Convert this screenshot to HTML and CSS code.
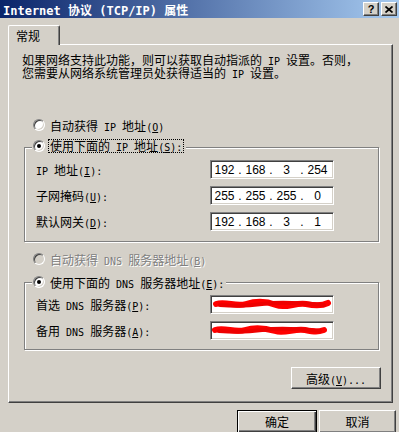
FILE: index.html
```html
<!DOCTYPE html>
<html lang="zh-CN">
<head>
    <meta charset="UTF-8">
    <title>Internet 协议 (TCP/IP) 属性</title>
    <link rel="stylesheet" href="styles.css">
</head>
<body>
    <div class="titlebar">
        <span class="title">Internet 协议 (TCP/IP) 属性</span>
        <div class="caption">
            <span class="cbtn help">?</span>
            <span class="cbtn close">
                <svg width="8" height="7" viewBox="0 0 8 7"><path d="M0.5 0.5L7.5 6.5M7.5 0.5L0.5 6.5" stroke="#000" stroke-width="1.7"/></svg>
            </span>
        </div>
    </div>

    <div class="client">
        <div class="tabs"><div class="tab">常规</div></div>

        <div class="panel">
            <p class="intro">如果网络支持此功能，则可以获取自动指派的<span class="en"> IP </span>设置。否则，<br>您需要从网络系统管理员处获得适当的<span class="en"> IP </span>设置。</p>

            <div class="radio-row first">
                <span class="radio"></span>
                <span>自动获得<span class="en"> IP </span>地址<span class="en">(<u>O</u>)</span></span>
            </div>

            <div class="group">
                <div class="legend">
                    <span class="radio checked"></span>
                    <span class="focus">使用下面的<span class="en"> IP </span>地址<span class="en">(<u>S</u>):</span></span>
                </div>
                <div class="fields">
                    <label><span class="en">IP </span>地址<span class="en">(<u>I</u>):</span></label>
                    <div class="field ip"><span>192</span><i>.</i><span>168</span><i>.</i><span>3</span><i>.</i><span>254</span></div>
                    <label>子网掩码<span class="en">(<u>U</u>):</span></label>
                    <div class="field ip"><span>255</span><i>.</i><span>255</span><i>.</i><span>255</span><i>.</i><span>0</span></div>
                    <label>默认网关<span class="en">(<u>D</u>):</span></label>
                    <div class="field ip"><span>192</span><i>.</i><span>168</span><i>.</i><span>3</span><i>.</i><span>1</span></div>
                </div>
            </div>

            <div class="radio-row disabled">
                <span class="radio"></span>
                <span>自动获得<span class="en"> DNS </span>服务器地址<span class="en">(<u>B</u>)</span></span>
            </div>

            <div class="group second">
                <div class="legend">
                    <span class="radio checked"></span>
                    <span>使用下面的<span class="en"> DNS </span>服务器地址<span class="en">(<u>E</u>):</span></span>
                </div>
                <div class="fields">
                    <label>首选<span class="en"> DNS </span>服务器<span class="en">(<u>P</u>):</span></label>
                    <div class="field">
                        <svg class="scribble" width="120" height="17" viewBox="0 0 120 17">
                            <path d="M4 8 C 14 5, 24 11, 34 8 S 54 5, 64 9 S 84 6, 94 8 S 110 10, 116 7" fill="none" stroke="#f00" stroke-width="6" stroke-linecap="round"/>
                            <path d="M8 9 Q 30 11, 50 8 T 112 9" fill="none" stroke="#e00" stroke-width="4" stroke-linecap="round"/>
                        </svg>
                    </div>
                    <label>备用<span class="en"> DNS </span>服务器<span class="en">(<u>A</u>):</span></label>
                    <div class="field">
                        <svg class="scribble" width="120" height="17" viewBox="0 0 120 17">
                            <path d="M3 8 C 13 5, 23 11, 33 8 S 53 6, 63 9 S 83 6, 93 8 S 106 10, 112 8" fill="none" stroke="#f00" stroke-width="6" stroke-linecap="round"/>
                            <path d="M7 9 Q 30 11, 50 8 T 108 9" fill="none" stroke="#e00" stroke-width="4" stroke-linecap="round"/>
                        </svg>
                    </div>
                </div>
            </div>

            <div class="adv-row">
                <button class="btn adv">高级<span class="en">(<u>V</u>)...</span></button>
            </div>
        </div>

        <div class="footer">
            <button class="btn default">确定</button>
            <button class="btn cancel">取消</button>
        </div>
    </div>
</body>
</html>
```

FILE: styles.css
```css
body {
    margin: 0;
    width: 399px;
    height: 432px;
    overflow: hidden;
    background-color: #d4d0c8;
    color: #000;
    font-family: "Noto Sans CJK SC", sans-serif;
    font-size: 12px;
}
.en {
    font-family: "DejaVu Sans Mono", monospace;
    font-size: 10px;
    line-height: 0;
    white-space: pre;
}
u {
    text-decoration-thickness: 1px;
    text-underline-offset: 1px;
}

/* Title bar */
.titlebar {
    height: 18px;
    display: flex;
    align-items: center;
    justify-content: space-between;
    padding: 0 2px 0 3px;
    background: linear-gradient(to right, #0a246a, #a6caf0);
}
.title {
    color: #fff;
    font-family: "DejaVu Sans Mono", "Noto Sans CJK SC", monospace;
    font-size: 12px;
    font-weight: bold;
    white-space: pre;
}
.caption {
    display: flex;
    gap: 2px;
}
.cbtn {
    width: 16px;
    height: 14px;
    box-sizing: border-box;
    display: flex;
    align-items: center;
    justify-content: center;
    background: #d4d0c8;
    border: 1px solid;
    border-color: #fff #404040 #404040 #fff;
    box-shadow: inset -1px -1px #808080;
    font-family: "Liberation Sans", sans-serif;
    font-size: 11px;
    font-weight: bold;
    line-height: 12px;
}

/* Tab + panel */
.client {
    padding: 7px 6px 0 8px;
}
.tabs {
    display: flex;
    align-items: flex-start;
    height: 19px;
}
.tab {
    position: relative;
    z-index: 1;
    width: 52px;
    height: 20px;
    box-sizing: border-box;
    padding: 2px 0 0 7px;
    line-height: 16px;
    background: #d4d0c8;
    border: 1px solid;
    border-bottom: none;
    border-color: #fff #404040 #404040 #fff;
    border-radius: 2px 2px 0 0;
    box-shadow: inset -1px 0 #808080;
}
.panel {
    height: 359px;
    box-sizing: border-box;
    padding: 8px 13px 0 13px;
    border: 1px solid;
    border-color: #fff #404040 #404040 #fff;
    box-shadow: inset -1px -1px #808080;
}
.intro {
    margin: 0;
    line-height: 13px;
}

/* Radios */
.radio-row {
    display: flex;
    align-items: center;
    gap: 5px;
    height: 16px;
    padding-left: 11px;
    margin-top: 9px;
}
.radio-row.first {
    margin-top: 38px;
}
.radio {
    position: relative;
    width: 12px;
    height: 12px;
    box-sizing: border-box;
    flex: none;
    border-radius: 50%;
    background: #fff;
    border: 1px solid;
    border-color: #808080 #fff #fff #808080;
    box-shadow: inset 1px 1px #404040, inset -1px -1px #d4d0c8;
}
.radio.checked::after {
    content: "";
    position: absolute;
    left: 3px;
    top: 3px;
    width: 4px;
    height: 4px;
    border-radius: 50%;
    background: #000;
}
.disabled {
    color: #808080;
    text-shadow: 1px 1px #fff;
}
.disabled .radio {
    background: #d4d0c8;
}

/* Group boxes */
.group {
    margin: 14px 0 0 2px;
    padding: 0 0 10px 11px;
    border: 1px solid #808080;
    box-shadow: inset 1px 1px #fff, 1px 1px #fff;
}
.group.second {
    margin-top: 15px;
    padding-bottom: 9px;
}
.legend {
    display: flex;
    align-items: center;
    gap: 3px;
    width: max-content;
    height: 16px;
    margin: -10px 0 0 -4px;
    padding: 0 2px 0 1px;
    background: #d4d0c8;
}
.second .legend {
    margin-top: -9px;
    gap: 5px;
}
.focus {
    border: 1px dotted #000;
    padding: 0 1px;
    line-height: 12px;
}
.fields {
    display: grid;
    grid-template-columns: 174px 124px;
    row-gap: 7px;
    align-items: center;
    margin-top: 6px;
}
.second .fields {
    margin-top: 5px;
}
.fields label {
    line-height: 16px;
}
.field {
    height: 19px;
    box-sizing: border-box;
    display: flex;
    align-items: center;
    padding-left: 1px;
    background: #fff;
    border: 1px solid;
    border-color: #808080 #fff #fff #808080;
    box-shadow: inset 1px 1px #404040, inset -1px -1px #d4d0c8;
    font-family: "Liberation Sans Narrow", "Liberation Sans", sans-serif;
    font-size: 12px;
}
.ip span {
    width: 25px;
    text-align: center;
}
.ip i {
    width: 6px;
    font-style: normal;
    text-align: center;
}
.scribble {
    display: block;
}

/* Buttons */
.btn {
    box-sizing: border-box;
    height: 23px;
    padding: 0;
    margin: 0;
    background: #d4d0c8;
    color: #000;
    font-family: "Noto Sans CJK SC", sans-serif;
    font-size: 12px;
    border: 1px solid;
    border-color: #fff #404040 #404040 #fff;
    box-shadow: inset -1px -1px #808080;
}
.adv-row {
    display: flex;
    justify-content: flex-end;
    margin: 17px -2px 0 0;
}
.btn.adv {
    width: 90px;
    height: 22px;
}
.footer {
    display: flex;
    justify-content: flex-end;
    gap: 2px;
    margin: 7px -3px 0 0;
}
.btn.default {
    width: 80px;
    border-color: #000;
    box-shadow: inset 1px 1px #fff, inset -1px -1px #404040, inset -2px -2px #808080;
}
.btn.cancel {
    width: 77px;
}
```
